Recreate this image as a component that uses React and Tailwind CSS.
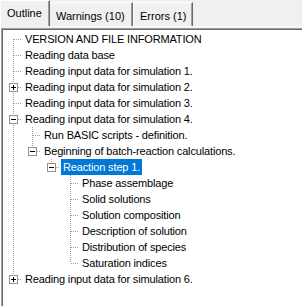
import React from "react";

const nodes = [
  { level: 0, text: "VERSION AND FILE INFORMATION" },
  { level: 0, text: "Reading data base" },
  { level: 0, text: "Reading input data for simulation 1." },
  { level: 0, text: "Reading input data for simulation 2.", box: "plus" },
  { level: 0, text: "Reading input data for simulation 3." },
  { level: 0, text: "Reading input data for simulation 4.", box: "minus" },
  { level: 1, text: "Run BASIC scripts - definition." },
  { level: 1, text: "Beginning of batch-reaction calculations.", box: "minus" },
  { level: 2, text: "Reaction step 1.", box: "minus", selected: true },
  { level: 3, text: "Phase assemblage" },
  { level: 3, text: "Solid solutions" },
  { level: 3, text: "Solution composition" },
  { level: 3, text: "Description of solution" },
  { level: 3, text: "Distribution of species" },
  { level: 3, text: "Saturation indices" },
  { level: 0, text: "Reading input data for simulation 6.", box: "plus" },
];

// does a later node share this level before the tree climbs above it
const hasNextSibling = (i) => {
  const lvl = nodes[i].level;
  for (let j = i + 1; j < nodes.length; j++) {
    if (nodes[j].level < lvl) return false;
    if (nodes[j].level === lvl) return true;
  }
  return false;
};

const Dots = ({ x1, y1, x2, y2 }) => (
  <line x1={x1} y1={y1} x2={x2} y2={y2} stroke="#a0a0a0" strokeWidth="1" strokeDasharray="1 1" />
);

const Cell = ({ up, down, horiz, box }) => (
  <svg width="19" height="16" className="shrink-0">
    {up && <Dots x1="10.5" y1="0" x2="10.5" y2="8" />}
    {down && <Dots x1="10.5" y1="8" x2="10.5" y2="16" />}
    {horiz && <Dots x1="11" y1="8.5" x2="19" y2="8.5" />}
    {box && (
      <>
        <rect x="6.5" y="4.5" width="8" height="8" fill="#fff" stroke="#919191" />
        <line x1="8" y1="8.5" x2="13" y2="8.5" stroke="#000" />
        {box === "plus" && <line x1="10.5" y1="6" x2="10.5" y2="11" stroke="#000" />}
      </>
    )}
  </svg>
);

const TreeRow = ({ i }) => {
  const node = nodes[i];
  const cells = [];
  // ancestor columns
  for (let k = 0; k < node.level; k++) {
    let anc = i;
    while (nodes[anc].level !== k) anc--;
    cells.push(<Cell key={k} up={hasNextSibling(anc)} down={hasNextSibling(anc)} />);
  }
  cells.push(
    <Cell key="own" up={i !== 0} down={hasNextSibling(i)} horiz box={node.box} />
  );
  return (
    <div className="flex h-4 items-start">
      {cells}
      <span
        className={
          "ml-px h-4 px-[2px] leading-4 tracking-[-0.15px] whitespace-nowrap " +
          (node.selected ? "bg-[#0078d7] text-white" : "text-black")
        }
      >
        {node.text}
      </span>
    </div>
  );
};

const App = () => {
  return (
    <div className="flex h-[306px] w-[302px] flex-col overflow-hidden bg-[#f0f0f0] font-['Liberation_Sans',Arial,sans-serif] text-[11px] text-black">
      {/* tab strip */}
      <div className="flex h-[26px] items-end">
        <div className="h-[26px] w-[50px] rounded-tl-[2px] border-l border-t border-r border-white border-r-[#696969] pl-[6px] pt-[4px] shadow-[inset_-1px_0_0_#a0a0a0]">
          Outline
        </div>
        <div className="h-[24px] w-[83px] border-t border-r border-white border-r-[#696969] pl-[6px] pt-[5px] shadow-[inset_-1px_0_0_#a0a0a0]">
          Warnings (10)
        </div>
        <div className="h-[24px] w-[60px] border-l border-t border-r border-white border-r-[#696969] pl-[6px] pt-[5px] shadow-[inset_-1px_0_0_#a0a0a0]">
          Errors (1)
        </div>
      </div>
      <div className="flex h-px">
        <div className="w-[50px] border-l border-white" />
        <div className="flex-1 bg-white" />
      </div>
      {/* tab page */}
      <div className="flex flex-1 flex-col border-l border-white pt-px">
        <div className="flex flex-1 flex-col border-l border-t border-[#a0a0a0]">
          <div className="flex-1 border-l border-t border-[#696969] bg-white pt-px">
            {nodes.map((n, i) => (
              <TreeRow key={i} i={i} />
            ))}
          </div>
        </div>
      </div>
    </div>
  );
};

export default App;
